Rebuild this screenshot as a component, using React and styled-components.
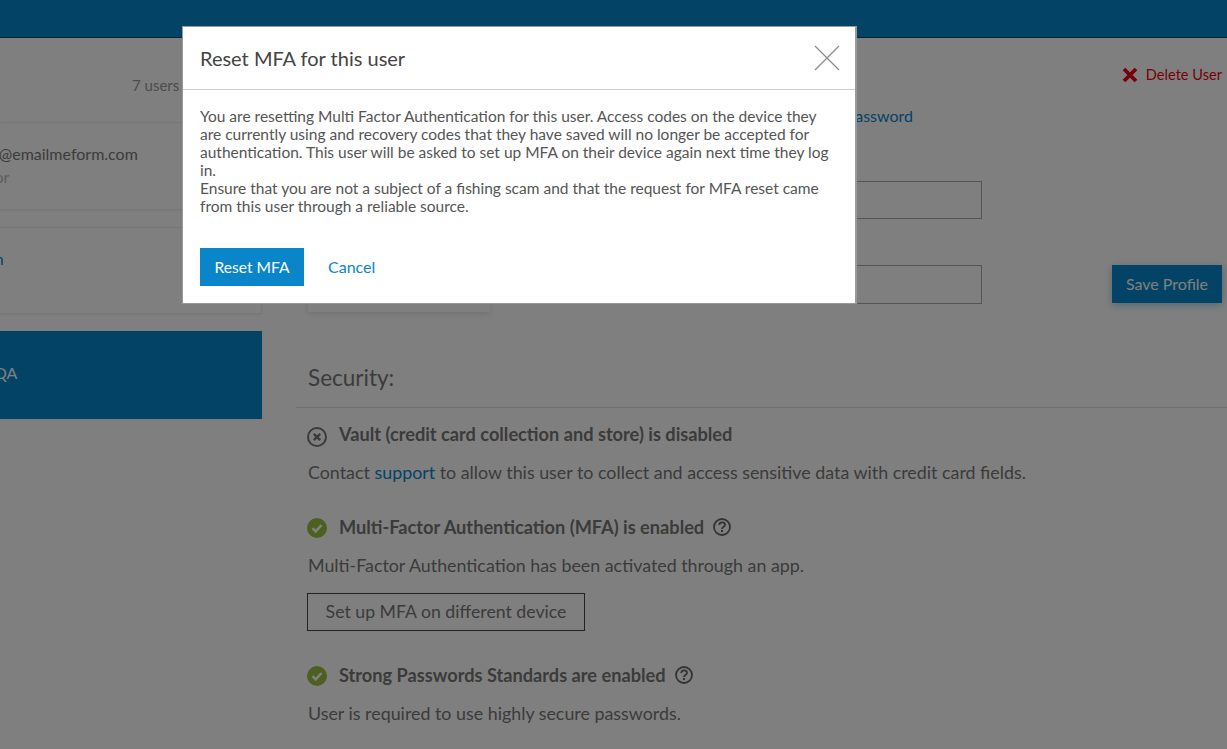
import React from "react";
import styled, { createGlobalStyle } from "styled-components";

const Global = createGlobalStyle`
  html, body { margin: 0; padding: 0; height: 100%; overflow: hidden; background: #fff; }
  body { font-family: Lato, "Liberation Sans", sans-serif; color: #333; }
  * { box-sizing: border-box; }
`;

const Page = styled.div`
  position: relative;
  width: 1227px;
  height: 749px;
  overflow: hidden;
  background: #fff;
`;
const TopBar = styled.header`
  height: 38px;
  background: #0486cc;
  border-bottom: 1px solid #024a70;
`;
const Content = styled.div`
  display: flex;
  height: 711px;
`;
const Sidebar = styled.aside`
  width: 262px;
  flex: none;
  padding-top: 37px;
  display: flex;
  flex-direction: column;
`;
const UserCount = styled.div`
  font-size: 15px;
  line-height: 20px;
  height: 47px;
  padding-left: 132px;
  color: #999;
  white-space: nowrap;
  overflow: hidden;
`;
const UserCard = styled.div`
  height: ${p => p.$h}px;
  margin-bottom: 17px;
  padding-top: 21px;
  background: ${p => (p.$active ? "#0486cc" : "#fff")};
  border: ${p => (p.$active ? "none" : "1px solid #eee")};
  border-left: none;
  box-shadow: 0 1px 3px rgba(0, 0, 0, 0.06);
  color: ${p => (p.$active ? "#fff" : "#777")};
  font-size: 16px;
  line-height: 20px;
  white-space: nowrap;
  overflow: hidden;
`;
const CardLine = styled.div`
  margin-left: ${p => p.$x}px;
  color: ${p => p.$color || "inherit"};
  margin-top: ${p => p.$top || 0}px;
`;
const Main = styled.main`
  flex: 1;
  min-width: 0;
  margin-left: 34px;
  display: flex;
  flex-direction: column;
`;
const ProfileArea = styled.section`
  display: flex;
  height: 324px;
  padding: 0 5px 0 12px;
`;
const PhotoCard = styled.div`
  width: 182px;
  height: 200px;
  margin-top: 74px;
  background: #fff;
  box-shadow: 0 2px 6px rgba(0, 0, 0, 0.12);
`;
const FieldColumn = styled.div`
  width: 492px;
  flex: none;
  padding: 68px 0 0 0;
  display: flex;
  flex-direction: column;
`;
const PasswordLink = styled.a`
  align-self: flex-end;
  margin: 0 69px 0 0;
  font-size: 16px;
  line-height: 20px;
  color: #0486cc;
`;
const TextInput = styled.div`
  height: ${p => p.$h}px;
  margin-top: ${p => p.$top}px;
  border: 1px solid #aaa;
  background: #fff;
`;
const ActionColumn = styled.div`
  flex: 1;
  display: flex;
  flex-direction: column;
  align-items: flex-end;
`;
const DeleteLink = styled.a`
  margin-top: 28px;
  display: flex;
  align-items: center;
  gap: 8px;
  font-size: 14.6px;
  line-height: 18px;
  color: #f00010;
`;
const SaveButton = styled.button`
  margin-top: 181px;
  width: 110px;
  height: 38px;
  border: none;
  background: #0486cc;
  color: #fff;
  font: 16px/38px Lato, sans-serif;
  padding: 0;
  box-shadow: 0 2px 8px rgba(4, 134, 204, 0.4);
`;
const SecurityTitle = styled.h2`
  margin: 0;
  height: 46px;
  padding: 2px 0 0 12px;
  font-size: 22.5px;
  line-height: 28px;
  font-weight: 400;
  color: #777;
  border-bottom: 1px solid #ddd;
`;
const SecurityList = styled.div`
  padding: 14px 0 0 12px;
`;
const StatusRow = styled.div`
  display: flex;
  align-items: center;
  height: 24px;
  font-size: 18.2px;
  font-weight: 700;
  color: #777;
`;
const StatusIcon = styled.span`
  display: flex;
  flex: none;
  width: 20px;
  height: 20px;
  margin: ${p => p.$dy}px 12px 0 -1px;
  color: ${p => p.$color};
`;
const HelpIcon = styled.span`
  display: flex;
  margin-left: 9px;
`;
const Description = styled.p`
  margin: 15px 0 ${p => p.$gap}px;
  font-size: 17.85px;
  line-height: 22px;
  color: #777;
`;
const OutlineButton = styled.button`
  display: block;
  margin: -2px 0 32px -1px;
  height: 38px;
  width: 278px;
  background: #fff;
  border: 1px solid #444;
  color: #777;
  font: 17.7px/36px Lato, sans-serif;
  padding: 0;
`;
const InlineLink = styled.a`
  color: #0486cc;
`;
const Overlay = styled.div`
  position: absolute;
  inset: 0;
  background: rgba(0, 0, 0, 0.5);
`;
const Modal = styled.div`
  position: absolute;
  left: 182px;
  top: 26px;
  width: 675px;
  height: 278px;
  background: #fff;
  border: 1px solid #999;
  border-right-width: 2px;
`;
const ModalHeader = styled.div`
  height: 63px;
  display: flex;
  align-items: center;
  justify-content: space-between;
  padding: 0 15px 0 17px;
  border-bottom: 1px solid #ccc;
`;
const ModalTitle = styled.h3`
  margin: 0;
  font-size: 20px;
  line-height: 24px;
  font-weight: 400;
  color: #444;
`;
const CloseButton = styled.button`
  display: flex;
  width: 26px;
  height: 26px;
  padding: 0;
  border: none;
  background: none;
`;
const ModalBody = styled.div`
  padding: 17px 17px 0;
  font-size: 15.5px;
  line-height: 18px;
  color: #555;
`;
const ModalActions = styled.div`
  display: flex;
  align-items: center;
  gap: 24px;
  margin-top: 33px;
`;
const PrimaryButton = styled.button`
  width: 104px;
  height: 38px;
  border: none;
  padding: 0;
  background: #0a85c9;
  color: #fff;
  font: 15.6px/38px Lato, sans-serif;
`;
const CancelLink = styled.a`
  font-size: 16px;
  color: #0a85c9;
`;

const CircleX = () => (
  <svg width="20" height="20" viewBox="0 0 20 20" fill="none" stroke="currentColor">
    <circle cx="10" cy="10" r="9" strokeWidth="2" />
    <path d="M6.8 6.8l6.4 6.4M13.2 6.8l-6.4 6.4" strokeWidth="2.4" />
  </svg>
);
const CircleCheck = () => (
  <svg width="20" height="20" viewBox="0 0 20 20" fill="none">
    <circle cx="10" cy="10" r="10" fill="currentColor" />
    <path d="M5.5 10.2l3.2 3.2 5.8-6.4" stroke="#fff" strokeWidth="2.6" />
  </svg>
);
const Help = () => (
  <svg width="18" height="18" viewBox="0 0 18 18" fill="none" stroke="#666" strokeWidth="1.8">
    <circle cx="9" cy="9" r="8" />
    <path d="M6.2 7c0-1.700 1.300-2.700 2.900-2.700S12 5.300 12 6.800c0 2.200-3 2-3 4.200" />
    <path d="M9 12.100v1.800" strokeWidth="2" />
  </svg>
);

export default function App() {
  return (
    <Page>
      <Global />
      <TopBar />
      <Content>
        <Sidebar>
          <UserCount>7 users a</UserCount>
          <UserCard $h={88}>
            <CardLine $x={-28}>test@emailmeform.com</CardLine>
            <CardLine $x={-33} $color="#bbb" $top={3}>Editor</CardLine>
          </UserCard>
          <UserCard $h={87}>
            <CardLine $x={-26} $color="#0486cc">qa.n</CardLine>
          </UserCard>
          <UserCard $h={88} $active>
            <CardLine $x={-6} $top={11}>QA</CardLine>
          </UserCard>
        </Sidebar>
        <Main>
          <ProfileArea>
            <PhotoCard />
            <FieldColumn>
              <PasswordLink>Change password</PasswordLink>
              <TextInput $h={38} $top={55} />
              <TextInput $h={39} $top={46} />
            </FieldColumn>
            <ActionColumn>
              <DeleteLink>
                <svg width="16" height="16" viewBox="0 0 16 16"><path d="M2 2l12 12M14 2L2 14" stroke="#f00010" strokeWidth="3.8" /></svg>
                Delete User
              </DeleteLink>
              <SaveButton>Save Profile</SaveButton>
            </ActionColumn>
          </ProfileArea>
          <SecurityTitle>Security:</SecurityTitle>
          <SecurityList>
            <StatusRow>
              <StatusIcon $color="#777" $dy={6}><CircleX /></StatusIcon>
              Vault (credit card collection and store) is disabled
            </StatusRow>
            <Description $gap={32}>
              Contact <InlineLink>support</InlineLink> to allow this user to collect and access sensitive data with credit card fields.
            </Description>
            <StatusRow>
              <StatusIcon $color="#9cc13f" $dy={2}><CircleCheck /></StatusIcon>
              Multi-Factor Authentication (MFA) is enabled
              <HelpIcon><Help /></HelpIcon>
            </StatusRow>
            <Description $gap={19}>Multi-Factor Authentication has been activated through an app.</Description>
            <OutlineButton>Set up MFA on different device</OutlineButton>
            <StatusRow>
              <StatusIcon $color="#9cc13f" $dy={2}><CircleCheck /></StatusIcon>
              Strong Passwords Standards are enabled
              <HelpIcon><Help /></HelpIcon>
            </StatusRow>
            <Description $gap={0}>User is required to use highly secure passwords.</Description>
          </SecurityList>
        </Main>
      </Content>
      <Overlay />
      <Modal>
        <ModalHeader>
          <ModalTitle>Reset MFA for this user</ModalTitle>
          <CloseButton aria-label="Close">
            <svg width="26" height="26" viewBox="0 0 26 26"><path d="M1 1l24 24M25 1L1 25" stroke="#8a8a8a" strokeWidth="1.2" /></svg>
          </CloseButton>
        </ModalHeader>
        <ModalBody>
          You are resetting Multi Factor Authentication for this user. Access codes on the device they are currently using and recovery codes that they have saved will no longer be accepted for authentication. This user will be asked to set up MFA on their device again next time they log in.
          <br />
          Ensure that you are not a subject of a fishing scam and that the request for MFA reset came from this user through a reliable source.
          <ModalActions>
            <PrimaryButton>Reset MFA</PrimaryButton>
            <CancelLink>Cancel</CancelLink>
          </ModalActions>
        </ModalBody>
      </Modal>
    </Page>
  );
}
